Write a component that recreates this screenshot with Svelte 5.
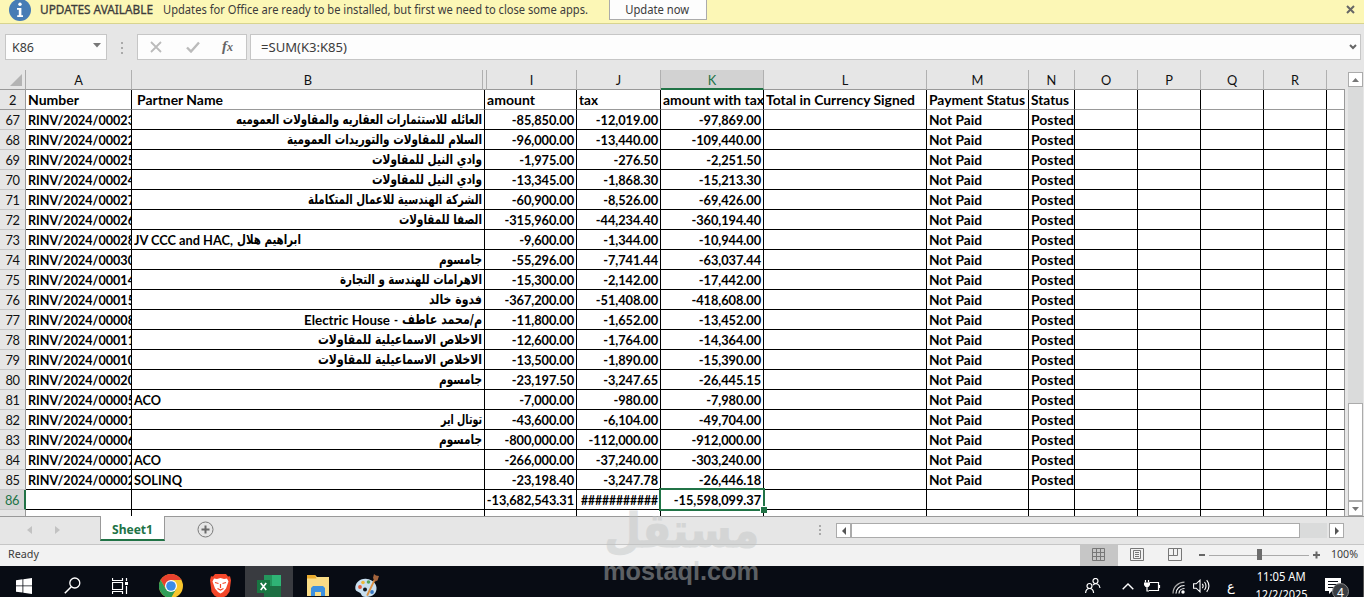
<script lang="ts">
	interface Row {
		n: number;
		id: string;
		// pieces of the partner name with their widths
		partner: [string, number][];
		rtl?: boolean;
		amount: string;
		tax: string;
		total: string;
	}

	const columns = [
		{ key: 'A', width: 106, title: 'Number', tw: 51 },
		{ key: 'B', width: 353, title: 'Partner Name', tw: 86 },
		{ key: 'I', width: 92, title: 'amount', tw: 48 },
		{ key: 'J', width: 84, title: 'tax', tw: 19 },
		{ key: 'K', width: 103, title: 'amount with tax', tw: 101 },
		{ key: 'L', width: 163, title: 'Total in Currency Signed', tw: 149 },
		{ key: 'M', width: 102, title: 'Payment Status', tw: 96 },
		{ key: 'N', width: 46, title: 'Status', tw: 38 },
		{ key: 'O', width: 63, title: '', tw: 0 },
		{ key: 'P', width: 63, title: '', tw: 0 },
		{ key: 'Q', width: 63, title: '', tw: 0 },
		{ key: 'R', width: 63, title: '', tw: 0 },
		{ key: '', width: 18, title: '', tw: 0 }
	];
	const template = '26px ' + columns.map((c) => `${c.width}px`).join(' ');
	const blanks = [0, 1, 2, 3, 4];

	const rows: Row[] = [
		{ n: 67, id: '00023', partner: [['العائله للاستثمارات العقاريه والمقاولات العموميه', 246]], rtl: true, amount: '-85,850.00', tax: '-12,019.00', total: '-97,869.00' },
		{ n: 68, id: '00022', partner: [['السلام للمقاولات والتوريدات العمومية', 195]], rtl: true, amount: '-96,000.00', tax: '-13,440.00', total: '-109,440.00' },
		{ n: 69, id: '00025', partner: [['وادي النيل للمقاولات', 110]], rtl: true, amount: '-1,975.00', tax: '-276.50', total: '-2,251.50' },
		{ n: 70, id: '00024', partner: [['وادي النيل للمقاولات', 110]], rtl: true, amount: '-13,345.00', tax: '-1,868.30', total: '-15,213.30' },
		{ n: 71, id: '00027', partner: [['الشركة الهندسية للاعمال المتكاملة', 174]], rtl: true, amount: '-60,900.00', tax: '-8,526.00', total: '-69,426.00' },
		{ n: 72, id: '00026', partner: [['الصفا للمقاولات', 83]], rtl: true, amount: '-315,960.00', tax: '-44,234.40', total: '-360,194.40' },
		{ n: 73, id: '00028', partner: [['JV CCC and HAC,', 99], ['ابراهيم هلال', 64]], amount: '-9,600.00', tax: '-1,344.00', total: '-10,944.00' },
		{ n: 74, id: '00030', partner: [['جامسوم', 43]], rtl: true, amount: '-55,296.00', tax: '-7,741.44', total: '-63,037.44' },
		{ n: 75, id: '00014', partner: [['الاهرامات للهندسة و التجارة', 142]], rtl: true, amount: '-15,300.00', tax: '-2,142.00', total: '-17,442.00' },
		{ n: 76, id: '00015', partner: [['فدوة خالد', 53]], rtl: true, amount: '-367,200.00', tax: '-51,408.00', total: '-418,608.00' },
		{ n: 77, id: '00008', partner: [['م/محمد عاطف', 80], ['-', 4], ['Electric House', 86]], rtl: true, amount: '-11,800.00', tax: '-1,652.00', total: '-13,452.00' },
		{ n: 78, id: '00011', partner: [['الاخلاص الاسماعيلية للمقاولات', 164]], rtl: true, amount: '-12,600.00', tax: '-1,764.00', total: '-14,364.00' },
		{ n: 79, id: '00010', partner: [['الاخلاص الاسماعيلية للمقاولات', 164]], rtl: true, amount: '-13,500.00', tax: '-1,890.00', total: '-15,390.00' },
		{ n: 80, id: '00020', partner: [['جامسوم', 43]], rtl: true, amount: '-23,197.50', tax: '-3,247.65', total: '-26,445.15' },
		{ n: 81, id: '00005', partner: [['ACO', 27]], amount: '-7,000.00', tax: '-980.00', total: '-7,980.00' },
		{ n: 82, id: '00001', partner: [['توتال اير', 41]], rtl: true, amount: '-43,600.00', tax: '-6,104.00', total: '-49,704.00' },
		{ n: 83, id: '00006', partner: [['جامسوم', 43]], rtl: true, amount: '-800,000.00', tax: '-112,000.00', total: '-912,000.00' },
		{ n: 84, id: '00007', partner: [['ACO', 27]], amount: '-266,000.00', tax: '-37,240.00', total: '-303,240.00' },
		{ n: 85, id: '00002', partner: [['SOLINQ', 48]], amount: '-23,198.40', tax: '-3,247.78', total: '-26,446.18' }
	];

	const isArabic = (s: string) => /[\u0600-\u06ff]/.test(s);

	// Squeeze a label horizontally so it takes the given width
	function fit(node: HTMLElement, width: number) {
		const natural = node.getBoundingClientRect().width;
		if (!natural || !width) return;
		node.style.transform = `scaleX(${width / natural})`;
		// keep the layout box in step with the scaled text
		if (node.classList.contains('piece')) node.style.width = `${width}px`;
	}
</script>

<div class="app">
	<div class="notice">
		<svg class="info" width="22" height="22" viewBox="0 0 22 22">
			<circle cx="11" cy="11" r="11" fill="#477cb5" />
			<circle cx="11" cy="5.2" r="1.7" fill="#fff" />
			<path d="M8 9h4.4v7.3H14V18H8.2v-1.7h1.6v-5.600H8z" fill="#fff" />
		</svg>
		<span class="notice-title"><span class="fit" use:fit={113}>UPDATES AVAILABLE</span></span>
		<span class="notice-text"><span class="fit" use:fit={425}>Updates for Office are ready to be installed, but first we need to close some apps.</span></span>
		<button class="update"><span class="fit mid" use:fit={64}>Update now</span></button>
		<svg class="close" width="9" height="9" viewBox="0 0 9 9"><path d="M1 1l7 7M8 1L1 8" stroke="#666" stroke-width="2" /></svg>
	</div>

	<div class="formula-bar">
		<div class="box name-box">
			<span class="fit" use:fit={22}>K86</span>
			<svg width="8" height="5" viewBox="0 0 8 5"><path d="M0 0h8L4 4.500z" fill="#777" /></svg>
		</div>
		<svg class="grip" width="2" height="12" viewBox="0 0 2 12"><path d="M0 0h2v2H0zM0 5h2v2H0zM0 10h2v2H0z" fill="#aaa" /></svg>
		<div class="box tools">
			<svg width="12" height="12" viewBox="0 0 12 12"><path d="M1 1l10 10M11 1L1 11" stroke="#bbb" stroke-width="1.800" /></svg>
			<svg width="14" height="12" viewBox="0 0 14 12"><path d="M1 6.500l4 4L13 1.500" fill="none" stroke="#bbb" stroke-width="2.400" /></svg>
			<span class="fx">f<small>x</small></span>
		</div>
		<div class="box formula">
			<span class="fit" use:fit={86}>=SUM(K3:K85)</span>
			<svg width="8" height="6" viewBox="0 0 8 6"><path d="M1 1l3 3 3-3" fill="none" stroke="#666" stroke-width="2" /></svg>
		</div>
	</div>

	<div class="sheet-area">
		<div class="sheet">
			<div class="row heads" style="grid-template-columns: {template}">
				<div class="corner"><svg width="12" height="12" viewBox="0 0 12 12"><path d="M12 0v12H0z" fill="#b4b4b4" /></svg></div>
				{#each columns as col}
					<div class="head" class:active={col.key === 'K'} class:hidden-after={col.key === 'B'}>{col.key}</div>
				{/each}
			</div>

			<div class="row titles" style="grid-template-columns: {template}">
				<div class="num">2</div>
				{#each columns as col}
					<div class="cell" class:indent={col.key === 'B'}><span class="fit" use:fit={col.tw}>{col.title}</span></div>
				{/each}
			</div>

			{#each rows as row (row.n)}
				<div class="row" style="grid-template-columns: {template}">
					<div class="num">{row.n}</div>
					<div class="cell"><span class="fit" use:fit={107}>RINV/2024/{row.id}</span></div>
					<div class="cell partner" dir={row.rtl ? 'rtl' : 'ltr'}>
						{#each row.partner as [text, width]}
							<span class="fit piece" class:arabic={isArabic(text)} use:fit={width}>{text}</span>
						{/each}
					</div>
					<div class="cell value">{row.amount}</div>
					<div class="cell value">{row.tax}</div>
					<div class="cell value">{row.total}</div>
					<div class="cell"></div>
					<div class="cell"><span class="fit" use:fit={53}>Not Paid</span></div>
					<div class="cell"><span class="fit" use:fit={43}>Posted</span></div>
					{#each blanks as b (b)}
						<div class="cell"></div>
					{/each}
				</div>
			{/each}

			<div class="row" style="grid-template-columns: {template}">
				<div class="num current">86</div>
				<div class="cell"></div>
				<div class="cell"></div>
				<div class="cell value">-13,682,543.31</div>
				<div class="cell value"><span class="fit" use:fit={77}>###########</span></div>
				<div class="cell value selected">-15,598,099.37</div>
				<div class="cell"></div>
				<div class="cell"></div>
				<div class="cell"></div>
				{#each blanks as b (b)}
					<div class="cell"></div>
				{/each}
			</div>

			<div class="row stub" style="grid-template-columns: {template}">
				<div class="num"></div>
				{#each columns as col}
					<div class="cell"></div>
				{/each}
			</div>
		</div>

		<div class="vscroll">
			<div class="arrow"><svg width="7" height="4" viewBox="0 0 7 4"><path d="M0 4h7L3.500 0z" fill="#777" /></svg></div>
			<div class="track"><div class="thumb"></div></div>
			<div class="arrow"><svg width="7" height="4" viewBox="0 0 7 4"><path d="M0 0h7L3.500 4z" fill="#777" /></svg></div>
		</div>
	</div>

	<div class="tabs">
		<div class="tab-nav">
			<svg width="5" height="8" viewBox="0 0 5 8"><path d="M5 0v8L0 4z" fill="#c2c2c2" /></svg>
			<svg width="5" height="8" viewBox="0 0 5 8"><path d="M0 0v8l5-4z" fill="#c2c2c2" /></svg>
		</div>
		<div class="tab"><span class="fit" use:fit={41}>Sheet1</span></div>
		<svg class="add" width="17" height="17" viewBox="0 0 17 17">
			<circle cx="8.500" cy="8.500" r="7.500" fill="none" stroke="#7b7b7b" />
			<path d="M8.500 4.500v8M4.500 8.500h8" stroke="#6a6a6a" stroke-width="2" />
		</svg>
		<svg class="grip" width="2" height="12" viewBox="0 0 2 12"><path d="M0 0h2v2H0zM0 4h2v2H0zM0 8h2v2H0z" fill="#aaa" /></svg>
		<div class="hscroll">
			<div class="arrow"><svg width="4" height="8" viewBox="0 0 4 8"><path d="M4 0v8L0 4z" fill="#555" /></svg></div>
			<div class="thumb"></div>
			<div class="rest"></div>
			<div class="arrow"><svg width="4" height="8" viewBox="0 0 4 8"><path d="M0 0v8l4-4z" fill="#555" /></svg></div>
		</div>
	</div>

	<div class="status">
		<span class="ready"><span class="fit" use:fit={31}>Ready</span></span>
		<div class="view on"><svg width="13" height="13" viewBox="0 0 13 13"><path d="M.5.5h12v12H.5zM4.500.5v12M8.500.5v12M.5 4.500h12M.5 8.500h12" fill="none" stroke="#777" /></svg></div>
		<div class="view"><svg width="14" height="13" viewBox="0 0 14 13"><path d="M.5.5h13v12H.5zM3.500 2.500h7v8h-7zM5 4.500h4M5 6.500h4M5 8.500h4" fill="none" stroke="#777" /></svg></div>
		<div class="view"><svg width="14" height="13" viewBox="0 0 14 13"><path d="M.5.5h13v12H.5zM5.500.5v7M9.500.5v7M.5 7.500h9" fill="none" stroke="#777" /></svg></div>
		<svg class="zoom" width="122" height="12" viewBox="0 0 122 12">
			<path d="M0 6h6M114 6h7M117.500 2.500v7" stroke="#666" stroke-width="2" />
			<path d="M10 6.500h100" stroke="#aaa" />
			<path d="M58 0h5v11h-5z" fill="#6c6c6c" />
		</svg>
		<span class="percent"><span class="fit" use:fit={27}>100%</span></span>
	</div>

	<div class="taskbar">
		<div class="task"><svg width="16" height="16" viewBox="0 0 16 16"><path d="M0 2.300L6.500 1.300v6.200H0zM7.300 1.200L16 0v7.500H7.300zM0 8.300h6.500v6.300L0 13.700zM7.300 8.300H16V16l-8.700-1.200z" fill="#fff" /></svg></div>
		<div class="task"><svg width="17" height="17" viewBox="0 0 17 17"><circle cx="10.800" cy="6" r="5" fill="none" stroke="#fff" stroke-width="1.300" /><path d="M7.300 9.700L.8 16.200" stroke="#fff" stroke-width="1.500" /></svg></div>
		<div class="task"><svg width="17" height="16" viewBox="0 0 17 16"><path d="M.5 0v2.500h10V0M.5 16v-2.500h10V16M.5 4.500h10v7H.5zM14.500 0v3M14.500 8v8" fill="none" stroke="#fff" stroke-width="1.200" /><path d="M13 4h3v3h-3z" fill="#fff" /></svg></div>
		<div class="task">
			<svg width="24" height="24" viewBox="0 0 24 24">
				<circle cx="12" cy="12" r="12" fill="#f8c62c" />
				<path d="M1.600 6A12 12 0 0 1 22.400 6H12l-5 9z" fill="#e8412e" />
				<path d="M1.600 6A12 12 0 0 0 12 24l5.200-9H6.800z" fill="#2f9d57" />
				<circle cx="12" cy="12" r="6" fill="#fff" />
				<circle cx="12" cy="12" r="4.800" fill="#3b8be8" />
			</svg>
		</div>
		<div class="task">
			<svg width="21" height="24" viewBox="0 0 21 24">
				<path d="M5 0h11l2 2.500 2-.3 1 4-1.500 11.500-3 4L10.500 25l-6-3.300-3-4L0 6.200l1-4 2 .3z" fill="#f4472a" />
				<path d="M4 4.500l3 .5 3.500-1 3.500 1 3-.5 1.500 3-2.500 7-3 3.500-2.500 1.500L8 18l-3-3.500-2.500-7z" fill="#fff" />
				<path d="M5 8.500l3.500 1M16 8.500l-3.500 1M10.500 10v4M7.500 14.500l3 1.500 3-1.500" fill="none" stroke="#f4472a" stroke-width="1.200" />
			</svg>
		</div>
		<div class="task running">
			<svg width="24" height="22" viewBox="0 0 24 22">
				<path d="M7 0h17v22H7z" fill="#24965c" />
				<path d="M15 0h9v11h-9z" fill="#2fb475" />
				<path d="M7 11h17v11H7z" fill="#1d6f43" />
				<path d="M0 5h13v13H0z" fill="#187642" />
				<path d="M3.700 8l5.500 7M9.200 8l-5.500 7" stroke="#fff" stroke-width="1.700" />
			</svg>
		</div>
		<div class="task">
			<svg width="22" height="21" viewBox="0 0 22 21">
				<path d="M0 0h8l2 2h12v19H0z" fill="#f9dc86" />
				<path d="M0 0h8l1.500 3.500H0z" fill="#e9ab2e" />
				<path d="M4 21v-8l2-2h10l2 2v8h-4v-4H8v4z" fill="#3d91df" />
			</svg>
		</div>
		<div class="task">
			<svg width="24" height="23" viewBox="0 0 24 23">
				<path d="M12 5C5 4 0 9 .3 14.500c.3 4 5 3 5.700 5.500.5 2 2 3 5 3 7 0 11-4 10.500-9.500C21 9 17 5.500 12 5z" fill="#c8dff0" />
				<circle cx="5" cy="13" r="1.900" fill="#e25b3a" />
				<circle cx="8" cy="8.500" r="1.800" fill="#efb63b" />
				<circle cx="13.500" cy="8" r="1.800" fill="#54a35c" />
				<circle cx="17" cy="18" r="1.900" fill="#3978c4" />
				<circle cx="10" cy="15.500" r="2" fill="#101721" />
				<path d="M19.500 4l1.500 1-8 17-1.800-.8z" fill="#dc9142" />
				<path d="M18 4l1-4 2 1.500L24 2l-1.500 4.500-2.500 1z" fill="#a4653d" />
			</svg>
		</div>

		<div class="tray">
			<svg class="people" width="16" height="16" viewBox="0 0 16 16"><g fill="none" stroke="#fff" stroke-width="1.200"><circle cx="10.500" cy="3" r="2.500" /><circle cx="4.500" cy="8" r="2.500" /><path d="M.6 15c.4-6 7.600-6 8 0M8 7c3-2.500 6.500-1 7 3" /></g></svg>
			<svg class="up" width="12" height="7" viewBox="0 0 12 7"><path d="M.7 6.300L6 1l5.300 5.300" fill="none" stroke="#fff" stroke-width="1.400" /></svg>
			<svg class="battery" width="17" height="12" viewBox="0 0 17 12"><path d="M5.500 2.500h9v8H5M15.500 5v3M1.500 0v2.500M4.500 0v2.500M3 6v5h2" fill="none" stroke="#fff" stroke-width="1.200" /><path d="M0 2.500h6V5L4.500 7h-3L0 5z" fill="#fff" /></svg>
			<svg class="wifi" width="13" height="13" viewBox="0 0 13 13"><g fill="none" stroke="#fff" stroke-width="1.200"><path d="M1 12.500C1 6 6 1.300 12.500 1.200" stroke="#aaa" /><path d="M4 12.500c0-4.500 3.500-8 8.500-8M7 12.500c0-3 2.300-5 5.500-5" /></g><circle cx="11" cy="11" r="1.700" fill="#fff" /></svg>
			<svg class="sound" width="17" height="14" viewBox="0 0 17 14"><path d="M.6 4.800h2.600L7 1.200v11.600L3.200 9.200H.6zM9.300 4.800q1.700 2.200 0 4.400M11.500 3q3 4 0 8M13.700 1.200q4.500 5.800 0 11.600" fill="none" stroke="#fff" stroke-width="1.100" /></svg>
			<span class="lang">ع</span>
			<div class="clock">
				<div><span class="fit mid" use:fit={49}>11:05 AM</span></div>
				<div><span class="fit mid" use:fit={52}>12/2/2025</span></div>
			</div>
			<div class="messages">
				<svg width="17" height="17" viewBox="0 0 17 17"><path d="M0 0h16v13h-9l-3 3v-3H0z" fill="#fff" /><path d="M3 3.500h10M3 6.500h10M3 9.500h6" stroke="#0a0e15" /></svg>
				<span class="badge">4</span>
			</div>
		</div>
	</div>

	<div class="watermark">
		<div class="wm-ar"><span class="fit mid" use:fit={155}>مستقل</span></div>
		<div class="wm-en"><span class="fit mid" use:fit={156}>mostaql.com</span></div>
	</div>
</div>

<style>
	:global(body) {
		margin: 0;
		overflow: hidden;
	}

	.app {
		position: relative;
		width: 1364px;
		height: 597px;
		overflow: hidden;
		display: flex;
		flex-direction: column;
		background: #e6e6e6;
		font-family: 'Noto Sans', 'Open Sans', 'DejaVu Sans', sans-serif;
		font-size: 12px;
		color: #3c3c3c;
	}

	.app * {
		box-sizing: border-box;
	}

	svg {
		display: block;
		flex: none;
	}

	.fit {
		display: inline-block;
		flex: none;
		white-space: pre;
		transform-origin: left center;
	}

	.fit.mid {
		transform-origin: center;
	}

	/* Update notice */
	.notice {
		display: flex;
		height: 24px;
		flex: none;
		align-items: flex-start;
		padding-left: 9px;
		background: #fcf7b6;
		border-bottom: 1px solid #d8d48f;
		line-height: 20px;
	}

	.info {
		margin-top: -1px;
	}

	.notice-title {
		width: 123px;
		margin-left: 9px;
		-webkit-text-stroke: 0.3px #3c3c3c;
	}

	.notice-text {
		width: 446px;
	}

	.update {
		display: flex;
		align-items: center;
		justify-content: center;
		width: 98px;
		height: 21px;
		margin-top: -1px;
		padding: 0 2px 0 0;
		border: 1px solid #ababab;
		background: #fdfdfd;
		font: inherit;
		color: #3c3c3c;
	}

	.close {
		margin: 5px 9px 0 auto;
	}

	/* Formula bar */
	.formula-bar {
		display: flex;
		flex: none;
		height: 46px;
		padding: 10px 3px 10px 5px;
	}

	.box {
		display: flex;
		align-items: center;
		height: 26px;
		border: 1px solid #c6c6c6;
		background: #fdfdfd;
	}

	.name-box {
		justify-content: space-between;
		width: 102px;
		padding: 0 5px 0 6px;
	}

	.name-box svg {
		margin-top: -3px;
	}

	.formula-bar .grip {
		margin: 8px 14px 0;
	}

	.tools {
		width: 110px;
		margin-right: 3px;
		padding-left: 12px;
	}

	.tools svg + svg {
		margin-left: 24px;
	}

	.fx {
		margin: -2px 0 0 22px;
		font: italic bold 15px 'Liberation Serif', serif;
		color: #666;
	}

	.fx small {
		font-size: 12px;
	}

	.formula {
		flex: 1;
		justify-content: space-between;
		padding: 0 3px 0 10px;
	}

	/* Sheet */
	.sheet-area {
		display: flex;
		flex: none;
		height: 447px;
		border-bottom: 1px solid #999;
	}

	.sheet {
		width: 1345px;
		flex: none;
		font-family: Lato, 'DejaVu Sans', sans-serif;
		font-size: 12.8px;
	}

	.row {
		display: grid;
		grid-template-rows: 20px;
		height: 20px;
	}

	.heads {
		background: linear-gradient(#999, #999) bottom / 100% 1px no-repeat;
	}

	.corner {
		display: flex;
		align-items: flex-end;
		justify-content: flex-end;
		padding: 0 3px 3px 0;
		border-right: 1px solid #aaa;
		border-bottom: 1px solid #999;
	}

	.head {
		border-right: 1px solid #b0b0b0;
		border-bottom: 1px solid #999;
		line-height: 20px;
		text-align: center;
		color: #111;
	}

	.head:last-child {
		border-right-color: transparent;
	}

	/* columns C to H are hidden between B and I */
	.head.hidden-after {
		margin-right: 2px;
		padding-left: 2px;
	}

	.head.hidden-after + .head {
		margin-left: 1px;
		border-left: 1px solid #b0b0b0;
	}

	.head.active {
		background: #d2d2d2;
		border-bottom: 2px solid #217346;
		color: #217346;
	}

	.num {
		border-right: 1px solid #999;
		border-bottom: 1px solid #c8c8c8;
		line-height: 21px;
		text-align: center;
		letter-spacing: -0.3px;
		color: #111;
	}

	.num.current {
		border-right: 2px solid #217346;
		background: #d4d4d4;
		color: #217346;
	}

	.cell {
		display: flex;
		min-width: 0;
		overflow: hidden;
		padding: 0 2px;
		border-right: 1px solid #000;
		border-bottom: 1px solid #000;
		background: #fff;
		line-height: 21px;
		white-space: nowrap;
		font-weight: 700;
		color: #000;
	}

	.cell:last-child {
		border-right-color: #999;
	}

	.cell.indent {
		padding-left: 5px;
	}

	.titles .cell,
	.titles .num {
		border-bottom-color: #999;
	}

	.partner {
		gap: 4px;
	}

	.partner[dir='rtl'] .fit {
		transform-origin: right center;
	}

	.partner[dir='rtl'] .piece:not(.arabic) {
		direction: ltr;
		transform-origin: left center;
	}

	.arabic {
		font: bold 13.5px/19px 'DejaVu Sans', sans-serif;
	}

	.value {
		justify-content: flex-end;
		letter-spacing: -0.06px;
	}

	.value .fit {
		transform-origin: right center;
	}

	.selected {
		position: relative;
		overflow: visible;
	}

	.selected::before {
		content: '';
		position: absolute;
		inset: -2px;
		border: 2px solid #217346;
	}

	.selected::after {
		content: '';
		position: absolute;
		right: -4px;
		bottom: -4px;
		width: 6px;
		height: 6px;
		border: solid #fff;
		border-width: 1px 0 0 1px;
		background: #217346;
		z-index: 2;
	}

	.stub {
		grid-template-rows: 6px;
		height: 6px;
	}

	.stub .cell,
	.stub .num {
		border-bottom: 0;
	}

	/* Scrollbars */
	.vscroll {
		display: flex;
		flex-direction: column;
		width: 15px;
		height: 444px;
		margin: 2px 0 0 3px;
	}

	.arrow {
		display: flex;
		flex: none;
		align-items: center;
		justify-content: center;
		width: 15px;
		height: 15px;
		border: 1px solid #ababab;
		background: #fff;
	}

	.track {
		display: flex;
		flex: 1;
		align-items: flex-end;
		background: #dadbdb;
	}

	.vscroll .thumb {
		width: 15px;
		height: 98px;
		border: 1px solid #ababab;
		background: #fff;
	}

	.tabs {
		display: flex;
		flex: none;
		height: 28px;
		border-bottom: 1px solid #c6c6c6;
	}

	.tab-nav {
		display: flex;
		gap: 23px;
		width: 100px;
		padding: 9px 0 0 27px;
	}

	.tab {
		width: 65px;
		height: 25px;
		margin-top: -1px;
		padding-left: 11px;
		border: solid #999;
		border-width: 0 1px;
		border-bottom: 2px solid #217346;
		background: #fff;
		line-height: 27px;
		font-weight: 700;
		color: #217346;
	}

	.add {
		margin: 4px 0 0 32px;
	}

	.tabs .grip {
		margin: 8px 0 0 605px;
	}

	.hscroll {
		display: flex;
		width: 508px;
		margin: 6px 0 0 15px;
	}

	.hscroll .thumb {
		width: 449px;
		height: 15px;
		border: 1px solid #ababab;
		background: #fff;
	}

	.rest {
		width: 27px;
		height: 15px;
		margin-right: 2px;
		background: #dadbdb;
	}

	/* Status bar */
	.status {
		display: flex;
		flex: none;
		align-items: center;
		height: 21px;
		background: #f2f2f2;
		font-size: 11px;
	}

	.ready {
		width: 1072px;
		margin-left: 8px;
		margin-top: -4px;
	}

	.percent {
		margin-top: -4px;
	}

	.view {
		display: flex;
		align-items: center;
		justify-content: center;
		width: 38px;
		height: 21px;
		padding: 0 1px 2px 0;
	}

	.view.on {
		background: #c6c6c6;
	}

	.zoom {
		margin: -2px 10px 0 5px;
	}

	/* Taskbar */
	.taskbar {
		display: flex;
		flex: none;
		align-items: flex-start;
		height: 31px;
		background: #080c14;
		color: #fff;
	}

	.task {
		display: flex;
		align-items: center;
		justify-content: center;
		width: 49px;
		height: 39px;
	}

	.task:first-child,
	.task:nth-child(2),
	.task:nth-child(3) {
		width: 48px;
	}

	.task:nth-child(4) {
		width: 54px;
	}

	.task:nth-child(5) {
		width: 47px;
		padding-right: 3px;
	}

	.running {
		width: 48px;
		background: #393b40;
	}

	.tray {
		display: flex;
		margin-left: auto;
		height: 31px;
	}

	.people {
		margin: 12px 21px 0 0;
	}

	.up {
		margin: 17px 10px 0 0;
	}

	.battery {
		margin: 14px 11px 0 0;
	}

	.wifi {
		margin: 15px 8px 0 0;
	}

	.sound {
		margin: 13px 17px 0 0;
	}

	.lang {
		width: 10px;
		margin: 12px 13px 0 0;
		font: 13px/18px 'DejaVu Sans', sans-serif;
	}

	.clock {
		width: 62px;
		height: 31px;
		margin-right: 13px;
		padding-top: 2px;
		line-height: 18px;
		text-align: center;
	}

	.messages {
		position: relative;
		width: 39px;
		padding-top: 12px;
		border-right: 1px solid #555;
	}

	.badge {
		position: absolute;
		left: 7px;
		top: 17px;
		width: 17px;
		height: 17px;
		border: 1px solid #888;
		border-radius: 50%;
		background: #3a3d42;
		line-height: 17px;
		text-align: center;
	}

	.watermark {
		position: absolute;
		left: 604px;
		top: 505px;
		width: 155px;
		opacity: 0.46;
		color: #c0c3c3;
		font-weight: 700;
	}

	.watermark div {
		display: flex;
		justify-content: center;
	}

	.wm-ar {
		height: 54px;
		font: bold 48px/50px 'DejaVu Sans', sans-serif;
		-webkit-text-stroke: 1px #c0c3c3;
	}

	.wm-en {
		font: bold 25px/24px 'Liberation Sans', sans-serif;
	}
</style>
